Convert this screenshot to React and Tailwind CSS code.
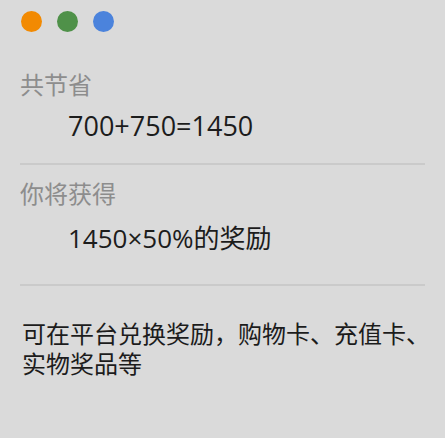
export default function App() {
  const font = { fontFamily: '"Noto Sans CJK SC", "Noto Sans", sans-serif' };
  const numFont = { fontFamily: '"Open Sans", "Noto Sans CJK SC", sans-serif' };
  return (
    <div className="w-[445px] h-[438px] bg-[#dadada] overflow-hidden" style={font}>
      <div className="flex gap-[15px] pl-[21px] pt-[11px]">
        <div className="w-[21px] h-[21px] rounded-full bg-[#f28a02]" />
        <div className="w-[21px] h-[21px] rounded-full bg-[#4f9149]" />
        <div className="w-[21px] h-[21px] rounded-full bg-[#4b83dc]" />
      </div>
      <div className="px-5">
        <div className="mt-[37px] h-[30px] leading-[30px] text-[24px] text-[#8d8d8d]">共节省</div>
        <div className="mt-[10px] h-[34px] leading-[34px] text-[27px] text-[#1c1c1c] pl-[48px] whitespace-nowrap" style={numFont}>700+750=1450</div>
        <div className="mt-[20px] h-[2px] bg-[#cacaca]" />
        <div className="mt-[13px] h-[30px] leading-[30px] text-[24px] text-[#8d8d8d]">你将获得</div>
        <div className="mt-[13px] h-[34px] leading-[34px] text-[26px] text-[#1c1c1c] pl-[48px] whitespace-nowrap" style={numFont}>1450×50%的奖励</div>
        <div className="mt-[29px] h-[2px] bg-[#cacaca]" />
        <div className="mt-[32px] pl-[2px] leading-[30px] text-[24px] text-[#1c1c1c] whitespace-nowrap">
          可在平台兑换奖励，购物卡、充值卡、<br />实物奖品等
        </div>
      </div>
    </div>
  );
}
